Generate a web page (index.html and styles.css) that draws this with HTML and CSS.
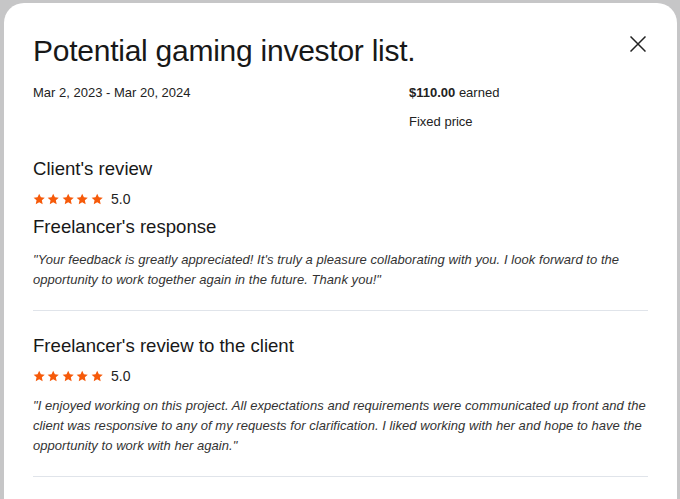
FILE: index.html
```html
<!DOCTYPE html>
<html>
<head>
<meta charset="utf-8">
<link rel="stylesheet" href="styles.css">
</head>
<body>
<div class="modal">
  <div class="head">
    <h1 class="title">Potential gaming investor list.</h1>
    <button class="close" aria-label="Close">
      <svg width="16" height="16" viewBox="0 0 16 16"><path d="M0.5 0.5L15.5 15.5M15.5 0.5L0.5 15.5" stroke="#222" stroke-width="1.5" fill="none"/></svg>
    </button>
  </div>
  <div class="meta">
    <div class="dates">Mar 2, 2023 - Mar 20, 2024</div>
    <div class="money">
      <div><strong>$110.00</strong> earned</div>
      <div class="type">Fixed price</div>
    </div>
  </div>
  <section class="block">
    <h2 class="sub">Client's review</h2>
    <div class="rating">
      <span class="stars">
        <svg viewBox="0 0 14 14"><path d="M7 .8l1.9 4 4.4.5-3.3 3 .9 4.3L7 10.4l-3.9 2.2.9-4.3-3.3-3 4.4-.5z"/></svg><svg viewBox="0 0 14 14"><path d="M7 .8l1.9 4 4.4.5-3.3 3 .9 4.3L7 10.4l-3.9 2.2.9-4.3-3.3-3 4.4-.5z"/></svg><svg viewBox="0 0 14 14"><path d="M7 .8l1.9 4 4.4.5-3.3 3 .9 4.3L7 10.4l-3.9 2.2.9-4.3-3.3-3 4.4-.5z"/></svg><svg viewBox="0 0 14 14"><path d="M7 .8l1.9 4 4.4.5-3.3 3 .9 4.3L7 10.4l-3.9 2.2.9-4.3-3.3-3 4.4-.5z"/></svg><svg viewBox="0 0 14 14"><path d="M7 .8l1.9 4 4.4.5-3.3 3 .9 4.3L7 10.4l-3.9 2.2.9-4.3-3.3-3 4.4-.5z"/></svg>
      </span>
      <span class="score">5.0</span>
    </div>
    <h2 class="sub resp">Freelancer's response</h2>
    <p class="quote">"Your feedback is greatly appreciated! It's truly a pleasure collaborating with you. I look forward to the opportunity to work together again in the future. Thank you!"</p>
  </section>
  <section class="block">
    <h2 class="sub">Freelancer's review to the client</h2>
    <div class="rating">
      <span class="stars">
        <svg viewBox="0 0 14 14"><path d="M7 .8l1.9 4 4.4.5-3.3 3 .9 4.3L7 10.4l-3.9 2.2.9-4.3-3.3-3 4.4-.5z"/></svg><svg viewBox="0 0 14 14"><path d="M7 .8l1.9 4 4.4.5-3.3 3 .9 4.3L7 10.4l-3.9 2.2.9-4.3-3.3-3 4.4-.5z"/></svg><svg viewBox="0 0 14 14"><path d="M7 .8l1.9 4 4.4.5-3.3 3 .9 4.3L7 10.4l-3.9 2.2.9-4.3-3.3-3 4.4-.5z"/></svg><svg viewBox="0 0 14 14"><path d="M7 .8l1.9 4 4.4.5-3.3 3 .9 4.3L7 10.4l-3.9 2.2.9-4.3-3.3-3 4.4-.5z"/></svg><svg viewBox="0 0 14 14"><path d="M7 .8l1.9 4 4.4.5-3.3 3 .9 4.3L7 10.4l-3.9 2.2.9-4.3-3.3-3 4.4-.5z"/></svg>
      </span>
      <span class="score">5.0</span>
    </div>
    <p class="quote">"I enjoyed working on this project. All expectations and requirements were communicated up front and the client was responsive to any of my requests for clarification. I liked working with her and hope to have the opportunity to work with her again."</p>
  </section>
</div>
</body>
</html>
```
FILE: styles.css
```css
html, body {
  margin: 0;
  padding: 0;
  background: #c6c6c7;
  height: 100%;
  overflow: hidden;
}
body {
  font-family: "Liberation Sans", Arial, sans-serif;
  color: #181818;
}
.modal {
  margin: 3px 0 0 4px;
  width: 673px;
  height: 520px;
  box-sizing: border-box;
  background: #fff;
  border-radius: 20px 20px 0 0;
  padding: 30px 29px 0 29px;
}
.head {
  display: flex;
  justify-content: space-between;
  align-items: flex-start;
}
.title {
  margin: 0;
  font-size: 30px;
  font-weight: 400;
  line-height: 36px;
  letter-spacing: -0.25px;
}
.close {
  border: 0;
  background: none;
  padding: 0;
  margin: 3px 2px 0 0;
  width: 16px;
  height: 16px;
  cursor: pointer;
}
.close svg { display: block; }
.meta {
  display: grid;
  grid-template-columns: 376px 1fr;
  margin: 15px 0 3px;
  font-size: 13px;
  line-height: 18px;
  color: #222;
}
.money .type { margin-top: 11px; }
.money strong { font-weight: 700; }
.block {
  padding: 23px 0 20px;
  border-bottom: 1px solid #e0e4ea;
}
.sub {
  margin: 0;
  font-size: 18.6px;
  font-weight: 400;
  line-height: 24px;
}
.sub.resp { margin-top: 2px; }
.rating {
  display: flex;
  align-items: center;
  gap: 8px;
  margin: 8px 0 6px;
  height: 20px;
}
.stars { display: flex; gap: 2px; }
.stars svg { width: 12.4px; height: 12.4px; fill: #f65a0a; display: block; }
.score { font-size: 14px; color: #222; }
.quote {
  margin: 10px 0 0;
  font-size: 13px;
  letter-spacing: 0.05px;
  line-height: 20px;
  font-style: italic;
  color: #333;
}
.sub + .quote { margin-top: 11px; }
```
